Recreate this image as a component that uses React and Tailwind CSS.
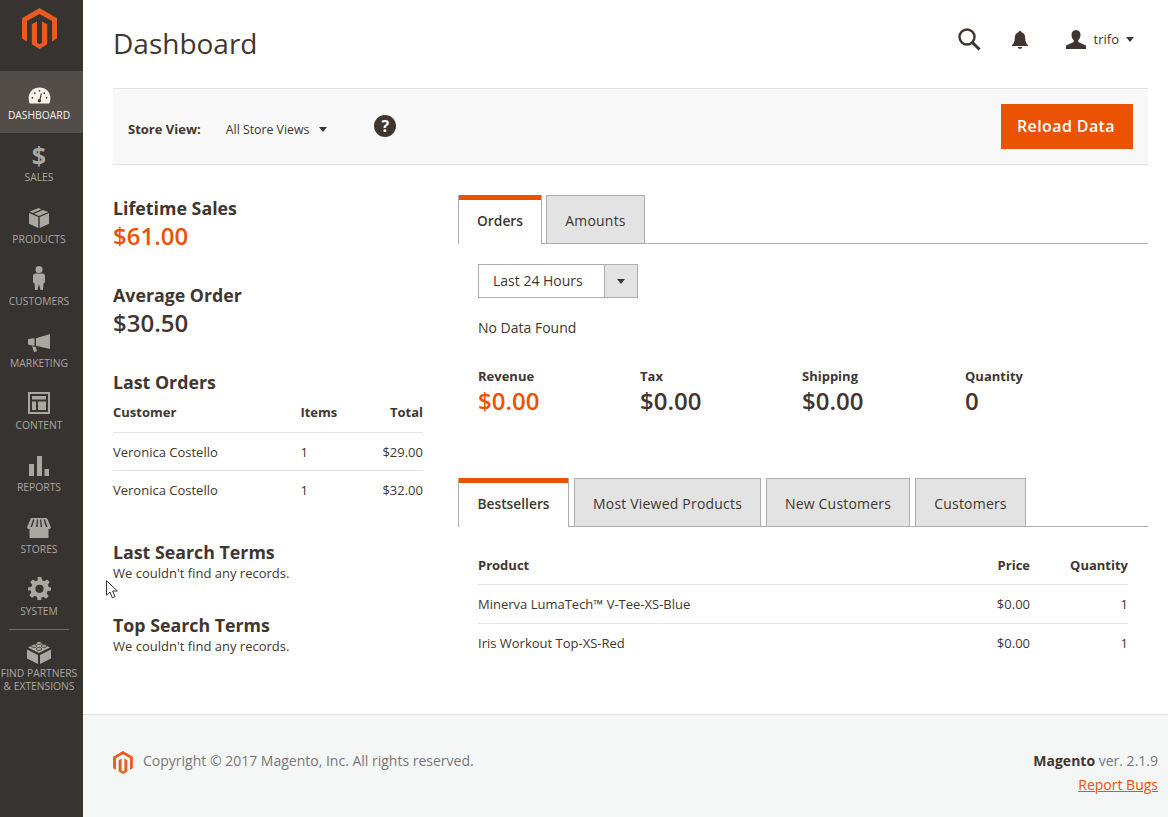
import React from 'react';

const MagentoLogo = ({ className }) => (
  <svg viewBox="0 0 36 42" className={className}>
    <path
      fill="#eb5a1e"
      d="M18 0L0 10.4v21L5.1 34.4V13.4L18 6 30.9 13.4v21L36 31.4v-21zM15.4 13.7v22.1L18 37.3l2.6-1.5V13.7l5.3 3v20.6L18 42 10.1 37.3V16.7z"
    />
  </svg>
);

const icons = {
  dashboard: (
    <svg viewBox="0 0 24 18" className="h-[17px] w-[23px]">
      <path fill="#f7f3eb" d="M12 .5C5.400.5.500 5.500.500 11.500c0 2.200.4 4.300 1 6h21c.6-1.700 1-3.800 1-6C23.500 5.500 18.600.5 12 .5z" />
      <path fill="#41362f" d="M13.400 6.500l1.100.4-1.300 6.500c.5.600.6 1.500.1 2.200-.6.8-1.700 1-2.500.4-.8-.6-1-1.700-.4-2.500.4-.6 1-.8 1.600-.8z" />
      <circle cx="4.500" cy="11.500" r=".9" fill="#41362f" />
      <circle cx="7" cy="6.500" r=".9" fill="#41362f" />
      <circle cx="12" cy="4" r=".9" fill="#41362f" />
      <circle cx="17" cy="6.500" r=".9" fill="#41362f" />
      <circle cx="19.500" cy="11.500" r=".9" fill="#41362f" />
    </svg>
  ),
  sales: (
    <span className="block h-6 pt-px text-[25px] font-bold leading-6 text-[#aaa6a0]">$</span>
  ),
  products: (
    <svg viewBox="0 0 20 20" className="h-5 w-5" fill="#aaa6a0">
      <path d="M9.600 0L.6 3.600l3 1.400L12.500 1.200zM14 2l-9 3.800L10 8l9.300-4z" />
      <path d="M0 5l9.300 4v11L0 15.800zM20 5v10.800L10.700 20V9z" />
    </svg>
  ),
  customers: (
    <svg viewBox="0 0 14 24" className="h-6 w-[14px]" fill="#aaa6a0">
      <circle cx="7" cy="3.500" r="3.500" />
      <path d="M3.500 7.500h7c1.500 0 2.500 1 2.500 2.500v6.500l-1.500.7-.5 6.800H8.500L7 18l-1.500 6H3l-.5-6.800-1.500-.7V10c0-1.500 1-2.500 2.500-2.500z" />
    </svg>
  ),
  marketing: (
    <svg viewBox="0 0 22 18" className="h-[18px] w-[22px]" fill="#aaa6a0">
      <path d="M22 0v15L8 11.800V4.200zM0 5l6.500-.8v7.600L3.800 11.500 0 10.500zM4 12.200l3.800.8 1.200 4.200-2.900.8z" />
    </svg>
  ),
  content: (
    <svg viewBox="0 0 22 22" className="h-[22px] w-[22px]" fill="#aaa6a0">
      <path fillRule="evenodd" d="M0 0h22v22H0zM2 2v18h18V2zM4 4h14v3.500H4zM4 9.500h4V18H4zM10 9.500h8V18h-8z" />
    </svg>
  ),
  reports: (
    <svg viewBox="0 0 20 20" className="h-5 w-5" fill="#aaa6a0">
      <path d="M0 8h5v12H0zM8 0h5v20H8zM15.500 13H20v7h-4.500z" />
    </svg>
  ),
  stores: (
    <svg viewBox="0 0 24 20" className="h-5 w-6" fill="#aaa6a0">
      <path fillRule="evenodd" d="M4 0h16l4 9.500c-.4 1-1.400 1.500-2.500 1.500v9h-19v-9C1.400 11 .4 10.500 0 9.500zM6 1.500L3.500 9H5l2.500-7.500zM10 1.500L9 9h1.500l.7-7.500zM13 1.500l.6 7.500h1.500l-1-7.500zM16.500 1.500L19 9h1.500L18 1.500z" />
    </svg>
  ),
  system: (
    <svg viewBox="0 0 24 24" className="h-[23px] w-[23px]" fill="#aaa6a0">
      <path fillRule="evenodd" d="M10 0h4l.7 3.500 2.300 1 3-2 2.600 2.600-2 3 1 2.300L24 11v3l-3.500.7-1 2.300 2 3-2.600 2.600-3-2-2.200 1L14 24h-4l-.7-3.400-2.200-1-3 2L1.500 19l2-3-1-2.300L0 14v-3l3.400-.6 1-2.300-2-3L5 2.500l3 2 2.300-1zM12 8a4.300 4.300 0 1 0 0 8.600A4.300 4.300 0 0 0 12 8z" />
    </svg>
  ),
  partners: (
    <svg viewBox="0 0 24 24" className="h-6 w-6" fill="#aaa6a0">
      <path d="M12 2l11 5.500-11 5.500L1 7.500z" />
      <path d="M0 9.500l11 5.500v9L0 18.500zM24 9.500v9L13 24v-9z" />
      <g stroke="#373330" strokeWidth=".7">
        <ellipse cx="12" cy="3" rx="2.700" ry="1.500" />
        <ellipse cx="7" cy="6" rx="2.700" ry="1.500" />
        <ellipse cx="17" cy="6" rx="2.700" ry="1.500" />
        <ellipse cx="12" cy="9" rx="2.700" ry="1.500" />
      </g>
    </svg>
  ),
};

const navItems = [
  { key: 'dashboard', label: 'DASHBOARD', active: true },
  { key: 'sales', label: 'SALES' },
  { key: 'products', label: 'PRODUCTS' },
  { key: 'customers', label: 'CUSTOMERS' },
  { key: 'marketing', label: 'MARKETING' },
  { key: 'content', label: 'CONTENT' },
  { key: 'reports', label: 'REPORTS' },
  { key: 'stores', label: 'STORES' },
  { key: 'system', label: 'SYSTEM' },
];

const ordersTabs = [
  { label: 'Orders', width: 'w-[84px]' },
  { label: 'Amounts', width: 'w-[99px]' },
];

const gridTabs = [
  { label: 'Bestsellers', width: 'w-[111px]' },
  { label: 'Most Viewed Products', width: 'w-[187px]' },
  { label: 'New Customers', width: 'w-[144px]' },
  { label: 'Customers', width: 'w-[111px]' },
];

const NavItem = ({ item }) => (
  <div
    className={`flex h-[62px] flex-col items-center justify-end pb-[11px] pr-[5px] ${
      item.active ? 'bg-[#524d49] text-[#f7f3eb]' : 'text-[#aaa6a0]'
    }`}
  >
    <div className="flex h-6 items-end justify-center">{icons[item.key]}</div>
    <span className="mt-[5px] text-[10.300px] leading-[13px]">{item.label}</span>
  </div>
);

const Sidebar = () => (
  <aside className="flex w-[83px] shrink-0 flex-col bg-[#373330]">
    <div className="flex h-[71px] justify-center pr-[5px] pt-2">
      <MagentoLogo className="h-[41px] w-[35px]" />
    </div>
    {navItems.map((item) => (
      <NavItem key={item.key} item={item} />
    ))}
    <div className="ml-[9px] w-[60px] border-t border-[#736e69]" />
    <div className="flex flex-col items-center pr-[5px] pt-[10px] text-[#aaa6a0]">
      {icons.partners}
      <span className="mt-[3px] whitespace-nowrap text-center text-[10.300px] leading-[13px]">
        FIND PARTNERS
        <br />& EXTENSIONS
      </span>
    </div>
  </aside>
);

const Stat = ({ label, value, orange, className }) => (
  <div className={className}>
    <div className="pt-px text-[17.800px] font-bold leading-[25px] text-[#41362f]">{label}</div>
    <div
      className={`-mt-px text-[24px] font-semibold leading-[31px] ${
        orange ? 'text-[#eb5202]' : 'text-[#41362f]'
      }`}
    >
      {value}
    </div>
  </div>
);

const Tab = ({ label, width, active }) =>
  active ? (
    <div className={`-mb-px flex h-[49px] items-center justify-center border border-b-0 border-t-0 border-[#adadad] bg-white pt-[4px] text-[13.800px] font-semibold text-[#41362f] shadow-[inset_0_5px_0_#eb5202] ${width}`}>
      {label}
    </div>
  ) : (
    <div className={`flex h-[48px] items-center justify-center border border-b-0 border-[#adadad] bg-[#e3e3e3] pt-[3px] text-sm tracking-[0.2px] text-[#41362f] ${width}`}>
      {label}
    </div>
  );

const Tabs = ({ tabs, className }) => (
  <div className={`flex items-end border-b border-[#adadad] ${className}`}>
    {tabs.map((t, i) => (
      <Tab key={t.label} label={t.label} width={t.width} active={i === 0} />
    ))}
  </div>
);

const Metric = ({ label, value, orange, className }) => (
  <div className={className}>
    <div className="text-[13px] font-bold leading-5 text-[#41362f]">{label}</div>
    <div
      className={`text-[24px] font-semibold leading-[30px] ${
        orange ? 'text-[#eb5202]' : 'text-[#41362f]'
      }`}
    >
      {value}
    </div>
  </div>
);

const Caret = ({ className }) => (
  <span
    className={`inline-block h-0 w-0 border-x-[4.500px] border-t-[5px] border-x-transparent border-t-[#41362f] ${className}`}
  />
);

const App = () => (
  <div className="relative flex min-h-[817px] overflow-hidden bg-white font-['Open_Sans',sans-serif] text-[#41362f]">
    <Sidebar />
    <div className="flex min-w-0 flex-1 flex-col">
      <div className="h-[714px] pl-[30px] pr-[20px]">
        <header className="flex h-[88px] items-start justify-between">
          <h1 className="pt-[23px] text-[28px] leading-[40px] text-[#41362f]">Dashboard</h1>
          <div className="flex items-center pr-[14px] pt-[28px]">
            <svg viewBox="0 0 23 23" className="h-[23px] w-[23px]" fill="none" stroke="#41362f">
              <circle cx="9" cy="9" r="7.500" strokeWidth="2.400" />
              <path d="M14.500 14.500l7 7" strokeWidth="3" />
            </svg>
            <svg viewBox="0 0 16 18" className="ml-[31px] h-[18px] w-4" fill="#41362f">
              <path d="M8 0c1 0 1.500.6 1.500 1.300 2.500.6 3.700 2.700 3.700 5.400 0 3.500.8 5.500 2.800 7.300v1H0v-1c2-1.800 2.800-3.800 2.800-7.300 0-2.700 1.200-4.800 3.700-5.400C6.500.6 7 0 8 0zM6 16h4c0 1.200-.9 2-2 2s-2-.8-2-2z" />
            </svg>
            <svg viewBox="0 0 20 19" className="ml-[38px] h-[19px] w-5" fill="#41362f">
              <path d="M10 0c3 0 4.500 2.200 4.500 5 0 2.200-1 4.200-2.200 5.300v1.700l7.700 3.500V19H0v-3.500L7.700 12v-1.700C6.500 9.200 5.500 7.200 5.500 5 5.500 2.200 7 0 10 0z" />
            </svg>
            <span className="ml-[8px] text-[13px] text-[#41362f]">trifo</span>
            <Caret className="ml-[7px]" />
          </div>
        </header>

        <div className="flex h-[77px] items-center border-y border-[#e3e3e3] bg-[#f8f8f8] px-[15px]">
          <span className="pt-[7px] text-[13px] font-bold">Store View:</span>
          <span className="ml-[25px] pt-[7px] text-[12.300px]">All Store Views</span>
          <Caret className="ml-[10px] mt-[5px]" />
          <span className="mb-[2px] ml-[47px] flex h-[22px] w-[22px] items-center justify-center rounded-full bg-[#41362f] text-[16px] font-bold text-white">
            ?
          </span>
          <button className="ml-auto h-[45px] w-[132px] bg-[#eb5202] pb-[2px] pr-[2px] text-[16px] font-semibold tracking-[0.4px] text-white">
            Reload Data
          </button>
        </div>

        <div className="flex pt-[30px]">
          <div className="w-[310px] shrink-0">
            <Stat label="Lifetime Sales" value="$61.00" orange />
            <Stat label="Average Order" value="$30.50" className="mt-[31px]" />
            <div className="mt-[32px] text-[17.800px] font-bold leading-[25px]">Last Orders</div>
            <table className="mt-[5px] w-full text-[13px]">
              <thead>
                <tr className="h-[32px] border-b border-[#e3e3e3] text-left">
                  <th className="pb-[7px] font-bold">Customer</th>
                  <th className="w-[82px] pb-[7px] font-bold">Items</th>
                  <th className="w-[40px] pb-[7px] text-right font-bold">Total</th>
                </tr>
              </thead>
              <tbody>
                <tr className="h-[38px] border-b border-[#e3e3e3]">
                  <td className="pt-[3px]">Veronica Costello</td>
                  <td className="pt-[3px]">1</td>
                  <td className="pt-[3px] text-right">$29.00</td>
                </tr>
                <tr className="h-[38px]">
                  <td className="pt-[3px]">Veronica Costello</td>
                  <td className="pt-[3px]">1</td>
                  <td className="pt-[3px] text-right">$32.00</td>
                </tr>
              </tbody>
            </table>
            <div className="mt-[32px] text-[17.800px] font-bold leading-[25px]">Last Search Terms</div>
            <p className="text-[13px] leading-[16px]">We couldn't find any records.</p>
            <div className="mt-[32px] text-[17.800px] font-bold leading-[25px]">Top Search Terms</div>
            <p className="text-[13px] leading-[16px]">We couldn't find any records.</p>
          </div>

          <div className="ml-[35px] min-w-0 flex-1">
            <Tabs tabs={ordersTabs} className="gap-[4px]" />
            <div className="px-[20px]">
              <div className="mt-[20px] flex h-[34px] w-[160px] border border-[#adadad] text-sm">
                <span className="flex flex-1 items-center pl-[14px]">Last 24 Hours</span>
                <span className="flex w-[33px] items-center justify-center border-l border-[#adadad] bg-[#e3e3e3]">
                  <Caret />
                </span>
              </div>
              <p className="mt-[20px] text-sm leading-[20px]">No Data Found</p>
              <div className="mt-[28px] flex">
                <Metric label="Revenue" value="$0.00" orange className="w-[162px]" />
                <Metric label="Tax" value="$0.00" className="w-[162px]" />
                <Metric label="Shipping" value="$0.00" className="w-[163px]" />
                <Metric label="Quantity" value="0" />
              </div>
            </div>

            <div className="mt-[62px]">
              <Tabs tabs={gridTabs} className="gap-[5px]" />
            </div>
            <div className="px-[20px] pt-[18px]">
              <table className="w-full text-[13px]">
                <thead>
                  <tr className="h-[39px] border-b border-[#e3e3e3] text-left">
                    <th className="pt-[2px] font-bold">Product</th>
                    <th className="w-[60px] pt-[2px] text-right font-bold">Price</th>
                    <th className="w-[98px] pt-[2px] text-right font-bold">Quantity</th>
                  </tr>
                </thead>
                <tbody>
                  <tr className="h-[39px] border-b border-[#e3e3e3]">
                    <td className="pt-[2px]">Minerva LumaTech™ V-Tee-XS-Blue</td>
                    <td className="pt-[2px] text-right">$0.00</td>
                    <td className="pt-[2px] text-right">1</td>
                  </tr>
                  <tr className="h-[39px]">
                    <td className="pt-[2px]">Iris Workout Top-XS-Red</td>
                    <td className="pt-[2px] text-right">$0.00</td>
                    <td className="pt-[2px] text-right">1</td>
                  </tr>
                </tbody>
              </table>
            </div>
          </div>
        </div>
      </div>

      <footer className="flex h-[103px] justify-between border-t border-[#e3e3e3] bg-[#f5f6f6] pl-[30px] pr-[10px] pt-[36px] text-sm text-[#777]">
        <div className="flex items-start">
          <MagentoLogo className="h-[23px] w-[20px]" />
          <span className="ml-[10px] leading-[20px]">Copyright © 2017 Magento, Inc. All rights reserved.</span>
        </div>
        <div className="text-right leading-[20px]">
          <div>
            <span className="font-bold text-[#41362f]">Magento</span> ver. 2.1.9
          </div>
          <a className="mt-[4px] block text-[#eb5202] underline">Report Bugs</a>
        </div>
      </footer>
    </div>

    {/* mouse pointer caught in the screenshot */}
    <svg viewBox="0 0 13 19" className="absolute left-[106px] top-[580px] h-[19px] w-[13px]">
      <path fill="#fff" stroke="#333" d="M.5.700v14.500l3.500-3.200 2.400 5.800 2.700-1.200-2.500-5.600h4.800z" />
    </svg>
  </div>
);

export default App;
